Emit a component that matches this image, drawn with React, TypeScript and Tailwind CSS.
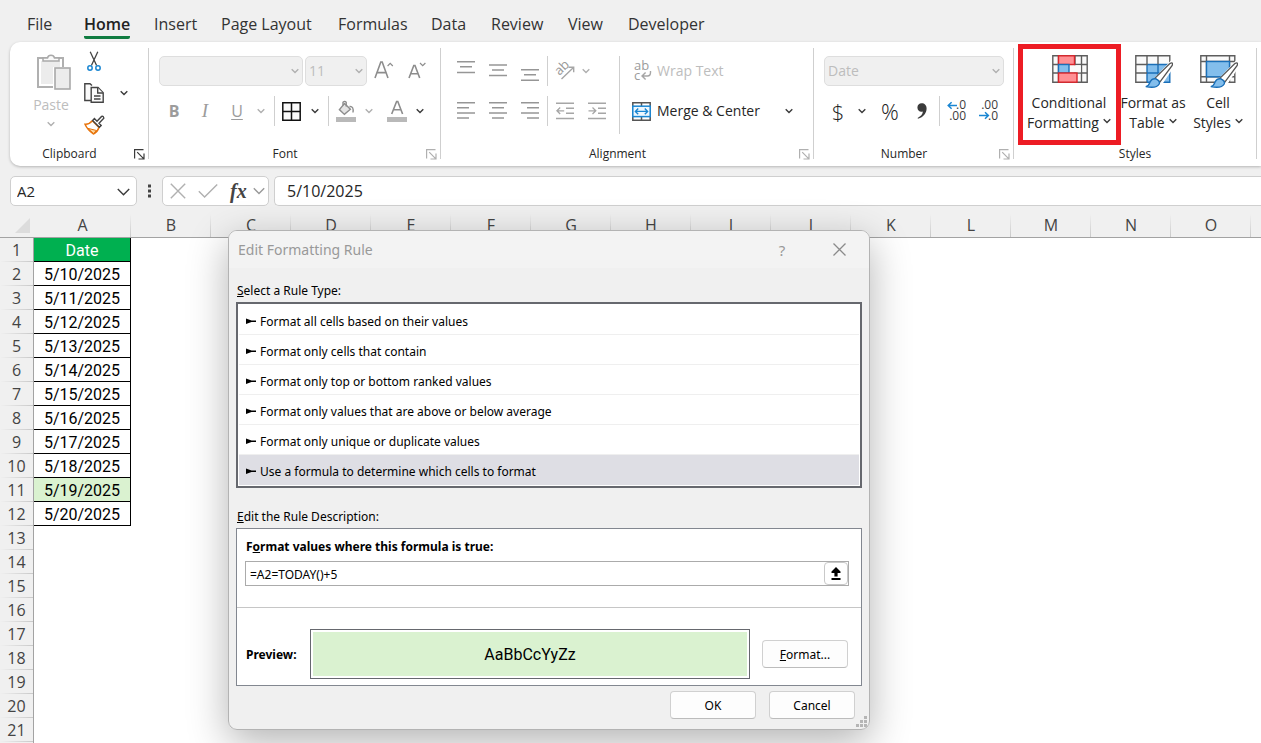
import React, { useState } from "react";

const UI = "font-['Open_Sans','Noto_Sans',sans-serif]";
const GREY = "#a6a6a6";
const DARK = "#3b3b3b";
const BLUE = "#1a86d2";

const tabs = [
  { name: "File", width: "w-[57px]" },
  { name: "Home", width: "w-[70px]" },
  { name: "Insert", width: "w-[67px]" },
  { name: "Page Layout", width: "w-[117px]" },
  { name: "Formulas", width: "w-[93px]" },
  { name: "Data", width: "w-[60px]" },
  { name: "Review", width: "w-[77px]" },
  { name: "View", width: "w-[60px]" },
  { name: "Developer", width: "w-[90px]" },
];

const columns = ["A", "B", "C", "D", "E", "F", "G", "H", "I", "J", "K", "L", "M", "N", "O", "P"];

const dates = [
  "5/10/2025",
  "5/11/2025",
  "5/12/2025",
  "5/13/2025",
  "5/14/2025",
  "5/15/2025",
  "5/16/2025",
  "5/17/2025",
  "5/18/2025",
  "5/19/2025",
  "5/20/2025",
];

const rules = [
  "Format all cells based on their values",
  "Format only cells that contain",
  "Format only top or bottom ranked values",
  "Format only values that are above or below average",
  "Format only unique or duplicate values",
  "Use a formula to determine which cells to format",
];

function Chevron({ color = DARK }: { color?: string }) {
  return (
    <svg width="8" height="6" viewBox="0 0 8 6" className="shrink-0" fill="none" stroke={color} strokeWidth="1.4">
      <path d="M0.7 1.2 4 4.5 7.3 1.2" />
    </svg>
  );
}

function WideChevron({ color = DARK }: { color?: string }) {
  return (
    <svg width="13" height="8" viewBox="0 0 13 8" className="shrink-0" fill="none" stroke={color} strokeWidth="1.4">
      <path d="M0.8 1 6.5 6.8 12.2 1" />
    </svg>
  );
}

function Tool({ label, width, children }: { label: string; width: string; children: React.ReactNode }) {
  return (
    <button type="button" aria-label={label} className={`flex h-full shrink-0 items-center justify-center ${width}`}>
      {children}
    </button>
  );
}

function Divider() {
  return <div className="h-[30px] w-px shrink-0 bg-[#cfcfcf]" />;
}

function Group({
  title,
  width,
  launcher,
  children,
}: {
  title: string;
  width: string;
  launcher?: string;
  children: React.ReactNode;
}) {
  return (
    <section aria-label={title} className={`flex shrink-0 ${width}`}>
      <div className="flex min-w-0 flex-1 flex-col">
        <div className="h-[102px]">{children}</div>
        <div className="flex h-5 items-center">
          <h2 className="flex-1 text-center text-xs text-[#262626]">{title}</h2>
          {launcher && (
            <button type="button" aria-label={`${title} settings`} className="mr-[3px] w-4">
              <svg width="11" height="11" viewBox="0 0 11 11" className="ml-auto" fill="none" stroke={launcher} strokeWidth="1.2">
                <path d="M0.6 9.5V0.6H9.5M3.2 3.2 9.6 9.6M10 4.5V10H4.5" />
              </svg>
            </button>
          )}
        </div>
      </div>
      <div className="mt-1.5 h-[111px] w-px bg-[#cfcfcf]" />
    </section>
  );
}

function Dropdown({ label, value, width }: { label: string; value: string; width: string }) {
  return (
    <div className={`relative h-[30px] shrink-0 ${width}`}>
      <select
        aria-label={label}
        disabled
        className="h-full w-full appearance-none rounded-[5px] border border-[#dedede] bg-[#f0f0f0] pl-[3px] text-sm text-[#bdbdbd] opacity-100"
      >
        <option>{value}</option>
      </select>
      <span className="pointer-events-none absolute top-3 right-1">
        <Chevron color="#b0b0b0" />
      </span>
    </div>
  );
}

function Lines({ rows }: { rows: [number, number, number][] }) {
  return (
    <svg width="18" height="24" viewBox="0 0 18 24" stroke="#969696" strokeWidth="1.5">
      {rows.map(([x1, x2, y]) => (
        <path key={y} d={`M${x1} ${y}H${x2}`} />
      ))}
    </svg>
  );
}

function PasteIcon() {
  return (
    <svg width="36" height="38" viewBox="0 0 36 38" fill="none" stroke="#a9a9a9" strokeWidth="2">
      <rect x="2" y="6" width="25" height="29" fill="#fff" stroke="#b0b0b0" />
      <rect x="5" y="9" width="19" height="23" fill="#ececec" stroke="none" />
      <path d="M7 9V6h4.5a3.6 3.6 0 0 1 7 0H23v3z" fill="#fafafa" strokeWidth="1.5" />
      <rect x="17" y="15" width="18" height="22" fill="#fff" stroke="none" />
      <rect x="19" y="16" width="15" height="21" fill="#ececec" strokeWidth="1.6" />
    </svg>
  );
}

function CutIcon() {
  return (
    <svg width="14" height="21" viewBox="0 0 14 21" fill="none">
      <path d="M3.2 0.8 9.6 14.6M10.8 0.8 4.4 14.6" stroke="#444" strokeWidth="1.3" />
      <circle cx="3" cy="17" r="2.2" stroke={BLUE} strokeWidth="1.5" />
      <circle cx="11" cy="17" r="2.2" stroke={BLUE} strokeWidth="1.5" />
    </svg>
  );
}

function CopyIcon() {
  return (
    <svg width="20" height="20" viewBox="0 0 20 20" fill="#fafafa" stroke="#444" strokeWidth="1.4">
      <path d="M7 17.5H0.8V0.8H6L8 2.5" />
      <path d="M7.2 4.5H14L19.2 9.7V19.2H7.2z" />
      <path d="M13.7 4.7V10H19M10 13H16.5M10 16H16.5" />
    </svg>
  );
}

function PainterIcon() {
  return (
    <svg width="21" height="20" viewBox="0 0 21 20" fill="none">
      <path d="M1 9.2C4 9.4 6.6 8 8.4 5.8L15 12.5C14 15.4 12 17.8 9.4 19 5.8 16.4 2.8 13.2 1 9.2z" fill="#fff" stroke="#e8740c" strokeWidth="1.5" />
      <path d="M4 13.4 12.6 15.5 9.4 18.4z" fill="#fbd7a0" stroke="#e8740c" strokeWidth="1" />
      <path d="M8.6 5.4 10.4 3.6 13 6.2 17.6 1.4Q19.6 0.6 19.8 3.2L15 8.2 17.2 10.4 15.4 12.2z" fill="#fff" stroke="#444" strokeWidth="1.4" />
    </svg>
  );
}

function BucketIcon() {
  return (
    <svg width="20" height="22" viewBox="0 0 20 22" fill="none" stroke="#8d8d8d" strokeWidth="1.4">
      <path d="M8.5 3.5 14.4 9.2 8.4 14.4 3.4 9.6z" fill="#e4e4e4" />
      <path d="M7 5.5V2.2Q8.7 0.6 10.2 2.2V6.5M13.5 6.5Q18 6 17 12.5" />
      <rect x="0" y="17" width="20" height="5" fill="#b9b9b9" stroke="none" />
    </svg>
  );
}

function FontColorIcon() {
  return (
    <svg width="20" height="22" viewBox="0 0 20 22" fill="none" stroke="#8d8d8d" strokeWidth="1.6">
      <path d="M4.7 14 9.6 1.5H10.8L15.6 14M6.3 9.8H14" />
      <rect x="0" y="17" width="20" height="5" fill="#b9b9b9" stroke="none" />
    </svg>
  );
}

function FontSizeIcon({ grow }: { grow: boolean }) {
  return grow ? (
    <svg width="20" height="20" viewBox="0 0 20 20" fill="none" stroke="#8d8d8d" strokeWidth="1.6">
      <path d="M1 17 6.8 1H8.2L14 17M3 11.6H12" />
      <path d="M13.6 5 16.2 2.4 18.8 5" strokeWidth="1.2" />
    </svg>
  ) : (
    <svg width="20" height="20" viewBox="0 0 20 20" fill="none" stroke="#8d8d8d" strokeWidth="1.6">
      <path d="M2 17 6.8 4.5H8L12.7 17M3.7 12.8H11.1" />
      <path d="M13 2 15.7 4.7 18.4 2" strokeWidth="1.2" />
    </svg>
  );
}

function BordersIcon() {
  return (
    <svg width="19" height="19" viewBox="0 0 19 19" fill="#fafafa" stroke="#111" strokeWidth="1.5">
      <path d="M0.8 0.8H18.2V18.2H0.8zM9.5 1V18M1 9.5H18" />
    </svg>
  );
}

function OrientationIcon() {
  return (
    <svg width="24" height="24" viewBox="0 0 24 24" className="overflow-visible" fill="none" stroke={GREY} strokeWidth="1.4">
      <text
        x="6.5"
        y="17"
        transform="rotate(-45 6.5 17)"
        fill="#999"
        stroke="none"
        className="font-['Open_Sans',sans-serif] text-[13px]"
      >
        ab
      </text>
      <path d="M8.5 20 20.5 8.5M15.5 8.2H20.7V13.2" />
    </svg>
  );
}

function IndentIcon({ increase }: { increase: boolean }) {
  return (
    <svg width="18" height="18" viewBox="0 0 18 18" fill="none" stroke={GREY} strokeWidth="1.5">
      <path d="M0 1.2H18M10 6.2H18M10 11.2H18M0 16.5H18" />
      <path d={increase ? "M0.5 8.8H7.5M4.5 5.5 7.8 8.8 4.5 12" : "M8.2 8.8H1.2M4.2 5.5 0.9 8.8 4.2 12"} strokeWidth="1.3" />
    </svg>
  );
}

function WrapIcon() {
  return (
    <svg width="20" height="24" viewBox="0 0 20 24" className="overflow-visible" fill="none" stroke={GREY} strokeWidth="1.4">
      <text x="2" y="11" fill="#9c9c9c" stroke="none" className="font-['Open_Sans',sans-serif] text-[13px]">ab</text>
      <text x="2" y="21" fill="#9c9c9c" stroke="none" className="font-['Open_Sans',sans-serif] text-[13px]">c</text>
      <path d="M18.5 12V13.5Q18.5 17 15.5 17H10.5M13.6 13.4 10 17 13.6 20.6" />
    </svg>
  );
}

function MergeIcon() {
  return (
    <svg width="19" height="19" viewBox="0 0 19 19" fill="none">
      <path d="M0.8 0.8H18.2V18.2H0.8zM9.5 1V5M9.5 14V18" fill="#fff" stroke="#555" strokeWidth="1.5" />
      <rect x="0.8" y="4.2" width="17.4" height="10.4" fill="#eef7fe" stroke={BLUE} strokeWidth="1.5" />
      <path d="M3.5 9.4H15.5M6.2 6.6 3.4 9.4 6.2 12.2M12.8 6.6 15.6 9.4 12.8 12.2" stroke={BLUE} strokeWidth="1.4" />
    </svg>
  );
}

function DecimalIcon({ increase }: { increase: boolean }) {
  const text = "font-['Open_Sans',sans-serif] text-xs font-normal";
  return increase ? (
    <svg width="20" height="22" viewBox="0 0 20 22" className="overflow-visible" fill={DARK}>
      <text x="19" y="9" textAnchor="end" className={text}>.0</text>
      <text x="19" y="20" textAnchor="end" className={text}>.00</text>
      <path d="M10 5.5H1.2M4.6 2.2 1.2 5.5 4.6 8.8" fill="none" stroke={BLUE} strokeWidth="1.5" />
    </svg>
  ) : (
    <svg width="20" height="22" viewBox="0 0 20 22" className="overflow-visible" fill={DARK}>
      <text x="19" y="9" textAnchor="end" className={text}>.00</text>
      <text x="19" y="20" textAnchor="end" className={text}>.0</text>
      <path d="M0 15.5H9.4M6 12.2 9.4 15.5 6 18.8" fill="none" stroke={BLUE} strokeWidth="1.5" />
    </svg>
  );
}

function ConditionalIcon() {
  return (
    <svg width="36" height="30" viewBox="0 0 36 30" fill="none">
      <path d="M0.8 1.8H35.2V28.2H0.8zM6.5 2V28M29.5 2V28M23 2V28M1 10.5H35M1 19H35" fill="#fafafa" stroke="#5d5d5d" strokeWidth="1.4" />
      <rect x="17" y="11.2" width="11.8" height="7.1" fill="#fafafa" />
      <rect x="6.5" y="1.8" width="16" height="8.7" fill="#ff9094" stroke="#d9252b" strokeWidth="1.4" />
      <rect x="6.5" y="10.5" width="10.5" height="8.5" fill="#83beec" stroke="#1a6fb8" strokeWidth="1.4" />
      <rect x="6.5" y="19" width="18.5" height="9.2" fill="#ff9094" stroke="#d9252b" strokeWidth="1.4" />
    </svg>
  );
}

function Brush() {
  return (
    <>
      <path d="M20 26 36 9 38 11 26 29z" fill="#fff" stroke="#fff" strokeWidth="3.5" />
      <path d="M19.8 24.4 34.6 9.8Q38.4 7.6 37.2 11.4L25 27.8z" fill="#fff" stroke="#555" strokeWidth="1.3" />
      <path d="M10.8 32.6Q13.8 31.8 14.8 28.6 16.6 24.2 20.8 24.8 25.4 26.8 24.2 30 21.6 34.8 10.8 32.6z" fill="#83beec" stroke="#1a6fb8" strokeWidth="1.4" />
    </>
  );
}

function TableStyleIcon() {
  return (
    <svg width="38" height="36" viewBox="0 0 38 36" fill="none">
      <path d="M0.8 1.8H34.8V28.2H0.8z" fill="#fafafa" />
      <path d="M12 10.5H34.8V28.2H12z" fill="#83beec" />
      <path d="M12 28.2V10.5H34.8V28.2H12M23 10.5V28M12 19H34.8" stroke="#1a6fb8" strokeWidth="1.4" />
      <path d="M12 28.2H0.8V1.8H34.8V10.5M12 2V10.5H1M23 2V10.5M1 19H12" stroke="#5d5d5d" strokeWidth="1.4" />
      <Brush />
    </svg>
  );
}

function CellStyleIcon() {
  return (
    <svg width="38" height="36" viewBox="0 0 38 36" fill="none">
      <path d="M0.8 1.8H34.8V28.2H0.8zM6.5 2V28M29.5 2V28M1 7.5H35M1 22.8H35" fill="#fafafa" stroke="#5d5d5d" strokeWidth="1.4" />
      <rect x="6.5" y="7.5" width="23" height="15.3" fill="#83beec" stroke="#1a6fb8" strokeWidth="1.4" />
      <Brush />
    </svg>
  );
}

function StyleButton({
  icon,
  first,
  second,
  width,
  marked = false,
}: {
  icon: React.ReactNode;
  first: string;
  second: string;
  width: string;
  marked?: boolean;
}) {
  return (
    <button type="button" className={`relative flex shrink-0 flex-col items-center ${width}`}>
      <span className="flex h-[39px] items-start pl-0.5">{icon}</span>
      <span className="text-sm leading-5 whitespace-nowrap text-[#262626]">{first}</span>
      <span className="flex items-center gap-1 text-sm leading-5 whitespace-nowrap text-[#262626]">
        {second}
        <span className="pb-1">
          <Chevron />
        </span>
      </span>
      {marked && <span className="absolute -top-2.5 left-0 h-[101px] w-[103px] border-5 border-[#ed1c24]" />}
    </button>
  );
}

function Ribbon() {
  return (
    <div className="ml-2.5 flex h-[124px] overflow-hidden rounded-l-[10px] bg-white shadow-[0_1px_3px_rgba(0,0,0,0.25)]">
      <Group title="Clipboard" width="w-[139px]" launcher={DARK}>
        <div className="flex h-full pt-[7px] pl-[10px]">
          <button type="button" className="flex w-[62px] flex-col items-center text-sm text-[#bdbdbd]">
            <span className="pl-[5px] pt-[3px]">
              <PasteIcon />
            </span>
            <span className="pt-[3px] leading-6">Paste</span>
            <span className="pt-1">
              <Chevron color="#b0b0b0" />
            </span>
          </button>
          <div className="flex w-6 flex-col items-center">
            <button type="button" aria-label="Cut" className="flex h-6 items-center"><CutIcon /></button>
            <button type="button" aria-label="Copy" className="mt-2 flex h-6 items-center"><CopyIcon /></button>
            <button type="button" aria-label="Format Painter" className="mt-2 flex h-6 items-center"><PainterIcon /></button>
          </div>
          <button type="button" aria-label="Copy options" className="mt-8 flex h-6 w-[35px] items-center justify-center">
            <Chevron />
          </button>
        </div>
      </Group>

      <Group title="Font" width="w-[292px]" launcher="#b0b0b0">
        <div className="flex flex-col gap-2.5 pt-3.5 pl-2.5">
          <div className="flex h-[30px]">
            <Dropdown label="Font name" value="" width="w-[144px]" />
            <div className="ml-0.5 flex">
              <Dropdown label="Font size" value="11" width="w-[62px]" />
            </div>
            <Tool label="Increase font size" width="w-[34px]"><FontSizeIcon grow /></Tool>
            <Tool label="Decrease font size" width="w-[32px]"><FontSizeIcon grow={false} /></Tool>
          </div>
          <div className="flex h-[30px] items-center text-base text-[#9c9c9c]">
            <Tool label="Bold" width="w-[30px]"><b>B</b></Tool>
            <Tool label="Italic" width="w-8"><i className="font-['Liberation_Serif',serif] text-[19px]">I</i></Tool>
            <Tool label="Underline" width="w-8"><u className="underline-offset-2">U</u></Tool>
            <Tool label="Underline options" width="w-4"><Chevron color="#b0b0b0" /></Tool>
            <div className="w-[5px]" />
            <Divider />
            <Tool label="Borders" width="w-8"><BordersIcon /></Tool>
            <Tool label="Border options" width="w-4"><Chevron /></Tool>
            <div className="w-[5px]" />
            <Divider />
            <Tool label="Fill color" width="w-[34px]"><BucketIcon /></Tool>
            <Tool label="Fill color options" width="w-3"><Chevron color="#b0b0b0" /></Tool>
            <div className="w-2.5" />
            <Tool label="Font color" width="w-6"><FontColorIcon /></Tool>
            <Tool label="Font color options" width="w-[22px]"><Chevron /></Tool>
          </div>
        </div>
      </Group>

      <Group title="Alignment" width="w-[373px]" launcher="#b0b0b0">
        <div className="flex pt-3.5">
          <div className="flex w-[178px] flex-col gap-2.5 pl-[9px]">
            <div className="flex h-[30px] items-center">
              <Tool label="Top align" width="w-8"><Lines rows={[[0, 18, 2.7], [3, 15, 7.7], [0, 18, 13.5]]} /></Tool>
              <Tool label="Middle align" width="w-8"><Lines rows={[[0, 18, 6], [3, 15, 11], [0, 18, 16.5]]} /></Tool>
              <Tool label="Bottom align" width="w-8"><Lines rows={[[0, 18, 10.7], [3, 15, 15.7], [0, 18, 21.2]]} /></Tool>
              <div className="w-px" />
              <Divider />
              <Tool label="Orientation" width="w-[34px]"><OrientationIcon /></Tool>
              <Tool label="Orientation options" width="w-2"><Chevron color="#b0b0b0" /></Tool>
            </div>
            <div className="flex h-[30px] items-center">
              <Tool label="Align left" width="w-8"><Lines rows={[[0, 18, 3.7], [0, 12, 8.7], [0, 18, 14], [0, 12, 19]]} /></Tool>
              <Tool label="Center" width="w-8"><Lines rows={[[0, 18, 3.7], [3, 15, 8.7], [0, 18, 14], [3, 15, 19]]} /></Tool>
              <Tool label="Align right" width="w-8"><Lines rows={[[0, 18, 3.7], [6, 18, 8.7], [0, 18, 14], [6, 18, 19]]} /></Tool>
              <div className="w-px" />
              <Divider />
              <Tool label="Decrease indent" width="w-[34px]"><IndentIcon increase={false} /></Tool>
              <Tool label="Increase indent" width="w-[30px]"><IndentIcon increase /></Tool>
            </div>
          </div>
          <div className="h-[78px] w-px bg-[#cfcfcf]" />
          <div className="flex flex-1 flex-col gap-2.5 pl-3">
            <button type="button" className="flex h-[30px] items-center gap-[5px] text-sm text-[#bdbdbd]">
              <WrapIcon />
              Wrap Text
            </button>
            <div className="flex h-[30px] items-center">
              <button type="button" className="flex items-center gap-1.5 text-sm text-[#262626]">
                <MergeIcon />
                Merge &amp; Center
              </button>
              <button type="button" aria-label="Merge options" className="mr-5 ml-auto flex h-full items-center">
                <Chevron />
              </button>
            </div>
          </div>
        </div>
      </Group>

      <Group title="Number" width="w-[200px]" launcher="#b0b0b0">
        <div className="flex flex-col gap-2.5 pt-3.5">
          <div className="pl-2.5">
            <Dropdown label="Number format" value="Date" width="w-[180px]" />
          </div>
          <div className="flex h-[30px] items-center pl-2 text-[22px] font-light text-[#222]">
            <Tool label="Accounting format" width="w-8"><span>$</span></Tool>
            <Tool label="Accounting options" width="w-4"><Chevron /></Tool>
            <Tool label="Percent style" width="w-10"><span>%</span></Tool>
            <Tool label="Comma style" width="w-6">
              <svg width="10" height="16" viewBox="0 0 10 16" fill={DARK}>
                <path d="M4.6 0.2C7.6 0.2 9.6 2.2 9.6 5.4 9.6 10 6.4 14 1 15.8L0.6 14.9C3.8 13.4 5.6 11.4 5.9 8.6 2.8 9.5 0.4 7.4 0.4 4.6 0.4 2 2.2 0.2 4.6 0.2z" />
              </svg>
            </Tool>
            <div className="w-[5px]" />
            <Divider />
            <Tool label="Increase decimal" width="w-[34px]"><DecimalIcon increase /></Tool>
            <Tool label="Decrease decimal" width="w-[30px]"><DecimalIcon increase={false} /></Tool>
          </div>
        </div>
      </Group>

      <Group title="Styles" width="w-[243px]">
        <div className="flex items-start pt-3 pl-1">
          <StyleButton icon={<ConditionalIcon />} first="Conditional" second="Formatting" width="w-[102px]" marked />
          <StyleButton icon={<TableStyleIcon />} first="Format as" second="Table" width="w-[66px]" />
          <StyleButton icon={<CellStyleIcon />} first="Cell" second="Styles" width="w-16" />
        </div>
      </Group>
    </div>
  );
}

function FormulaBar() {
  return (
    <div className="mt-2.5 ml-2.5 flex h-[30px] items-center text-base text-[#262626]">
      <div className="relative h-full w-[127px] shrink-0">
        <input
          aria-label="Name box"
          defaultValue="A2"
          className="h-full w-full rounded-[5px] border border-[#cfcfcf] bg-white pl-1.5 text-[15px] outline-none"
        />
        <span className="pointer-events-none absolute top-3 right-[7px]">
          <WideChevron />
        </span>
      </div>
      <svg width="25" height="14" viewBox="0 0 25 14" className="shrink-0" fill="#444">
        <path d="M11 0.5h3v3h-3zM11 5.5h3v3h-3zM11 10.5h3v3h-3z" />
      </svg>
      <div className="flex h-full w-[107px] shrink-0 items-center rounded-[5px] border border-[#cfcfcf] bg-white pl-[7px]">
        <button type="button" aria-label="Cancel entry">
          <svg width="16" height="16" viewBox="0 0 16 16" stroke="#b0b0b0" strokeWidth="1.4"><path d="M0.8 0.8 15.2 15.2M15.2 0.8 0.8 15.2" /></svg>
        </button>
        <button type="button" aria-label="Confirm entry" className="ml-3">
          <svg width="20" height="16" viewBox="0 0 20 16" fill="none" stroke="#b0b0b0" strokeWidth="1.4"><path d="M0.8 8.2 6.6 14 19.2 1.4" /></svg>
        </button>
        <button type="button" aria-label="Insert function" className="ml-3 flex h-full items-center gap-1.5">
          <i className="font-['Liberation_Serif',serif] text-xl leading-6 font-bold text-[#444]">fx</i>
          <svg width="12" height="8" viewBox="0 0 12 8" fill="none" stroke="#999" strokeWidth="1.4"><path d="M0.8 1.2 6 6.4 11.2 1.2" /></svg>
        </button>
      </div>
      <input
        aria-label="Formula bar"
        defaultValue="5/10/2025"
        className="ml-[5px] h-full min-w-0 flex-1 rounded-l-[5px] border border-r-0 border-[#cfcfcf] bg-white pl-3 text-base outline-none"
      />
    </div>
  );
}

function Sheet() {
  return (
    <div className="mt-2 flex-1 overflow-hidden bg-white">
      <table className="w-[1331px] table-fixed border-separate border-spacing-0 text-base">
        <colgroup>
          <col className="w-[34px]" />
          <col className="w-[97px]" />
          {columns.slice(1).map((c) => (
            <col key={c} className="w-20" />
          ))}
        </colgroup>
        <thead>
          <tr className="h-6 bg-[#f0f0f0] text-[#444]">
            <td className="border-b border-[#a3a3a3] p-0">
              <svg width="15" height="15" viewBox="0 0 15 15" className="ml-[15px]"><path d="M15 0V15H0z" fill="#dcdcdc" /></svg>
            </td>
            {columns.map((c) => (
              <th
                key={c}
                scope="col"
                className="border-b border-[#a3a3a3] bg-linear-to-t from-[#c9c9c9] to-[#f0f0f0] bg-[size:1px_100%] bg-right bg-no-repeat p-0 leading-[23px] font-normal"
              >
                {c}
              </th>
            ))}
          </tr>
        </thead>
        <tbody>
          {Array.from({ length: 22 }, (_, i) => {
            const text = i === 0 ? "Date" : dates[i - 1];
            const fill =
              i === 0 ? "bg-[#00b050] text-white" : i === 10 ? "bg-[#daf2d0] text-black" : "bg-white text-black";
            return (
              <tr key={i} className="h-6">
                <th
                  scope="row"
                  className="border-r border-[#a3a3a3] bg-[#f0f0f0] bg-linear-to-r from-[#f0f0f0] to-[#c9c9c9] bg-[size:100%_1px] bg-bottom bg-no-repeat p-0 leading-6 font-normal text-[#444]"
                >
                  {i + 1}
                </th>
                {text ? (
                  <td className={`border-r border-b border-black p-0 pt-0.5 text-center font-['Roboto',sans-serif] leading-5 ${fill}`}>
                    {text}
                  </td>
                ) : (
                  <td className="p-0" />
                )}
                <td colSpan={15} className="p-0" />
              </tr>
            );
          })}
        </tbody>
      </table>
    </div>
  );
}

const dialogButton =
  "h-7 w-[86px] shrink-0 rounded-[4px] border border-[#d0d0d0] border-b-[#bcbcbc] bg-[#fdfdfd] pt-0.5 text-xs text-black";

function RuleDialog() {
  const [selected, setSelected] = useState(5);
  return (
    <div
      role="dialog"
      aria-label="Edit Formatting Rule"
      className="absolute top-[230px] left-[228px] w-[642px] overflow-hidden rounded-[9px] border border-[#b3b3b3] bg-[#f0f0f0] font-['Noto_Sans','Open_Sans',sans-serif] text-xs text-black"
    >
      <div className="flex h-[37px] items-center bg-[#f3f3f3] pl-[9px] text-[#999]">
        <h1 className="flex-1 text-sm">Edit Formatting Rule</h1>
        <button type="button" aria-label="Help" className="w-10 text-center text-[15px]">?</button>
        <button type="button" aria-label="Close" className="mr-2 ml-[15px] flex w-11 justify-center">
          <svg width="13" height="13" viewBox="0 0 13 13" stroke="#8a8a8a" strokeWidth="1.3"><path d="M0.5 0.5 12.5 12.5M12.5 0.5 0.5 12.5" /></svg>
        </button>
      </div>
      <div className="px-[7px] pt-3.5 pb-2.5">
        <h2 id="rule-type" className="h-5 pl-px leading-[18px]"><u>S</u>elect a Rule Type:</h2>
        <ul role="listbox" aria-labelledby="rule-type" className="border-2 border-[#66686e] bg-white p-px">
          {rules.map((rule, i) => (
            <li
              key={rule}
              role="option"
              aria-selected={i === selected}
              onClick={() => setSelected(i)}
              className={`flex h-[30px] items-center gap-1 border-b pl-[7px] pt-1 ${
                i === selected ? "border-[#dedee4] bg-[#dedee4]" : "border-[#efefef]"
              }`}
            >
              <svg width="10" height="7" viewBox="0 0 10 7"><path d="M0 0.6 5.5 2.6H10V4H5.5L0 6z" /></svg>
              {rule}
            </li>
          ))}
        </ul>
        <h2 className="mt-5 h-5 pl-px leading-[18px]"><u>E</u>dit the Rule Description:</h2>
        <div className="border border-[#828790] bg-white">
          <div className="h-[79px] border-b border-[#c6c6c6] px-2 pt-2">
            <label htmlFor="formula" className="block h-6 pl-px leading-5 font-bold">F<u>o</u>rmat values where this formula is true:</label>
            <div className="mr-1 flex h-[25px] border border-[#ababab]">
              <input id="formula" defaultValue="=A2=TODAY()+5" className="min-w-0 flex-1 pt-0.5 pl-1 outline-none" />
              <button type="button" aria-label="Collapse dialog" className="flex w-6 items-center justify-center rounded-[4px] border border-[#c9c9c9]">
                <svg width="10" height="13" viewBox="0 0 10 13"><path d="M5 0 9.5 4.6V6H6.6V9.5H3.4V6H0.5V4.6zM0.5 11H9.5V13H0.5z" /></svg>
              </button>
            </div>
          </div>
          <div className="flex items-center px-[9px] pt-[21px] pb-1.5">
            <span className="w-16 pt-0.5 font-bold">Preview:</span>
            <div className="h-[50px] flex-1 border border-[#66686e] p-0.5">
              <div className="flex h-full items-center justify-center bg-[#daf2d0] pt-0.5 font-['Roboto',sans-serif] text-base">AaBbCcYyZz</div>
            </div>
            <button type="button" className={`mr-1 ml-3 ${dialogButton}`}><u>F</u>ormat...</button>
          </div>
        </div>
        <div className="flex justify-end gap-[13px] pt-[5px] pr-[7px]">
          <button type="button" className={dialogButton}>OK</button>
          <button type="button" className={dialogButton}>Cancel</button>
        </div>
      </div>
      <svg width="11" height="11" viewBox="0 0 11 11" className="absolute right-0.5 bottom-0.5" fill="#b5b5b5">
        <path d="M8 0h3v3H8zM4 4h3v3H4zM8 4h3v3H8zM0 8h3v3H0zM4 8h3v3H4zM8 8h3v3H8z" />
      </svg>
    </div>
  );
}

export default function App() {
  return (
    <div className={`relative flex h-screen flex-col overflow-hidden bg-[#f0f0f0] ${UI}`}>
      <nav className="flex h-[42px] shrink-0 pt-2.5 pl-[27px] text-base text-[#333]">
        {tabs.map(({ name, width }) => (
          <div key={name} className={`shrink-0 ${width}`}>
            <a
              href="#"
              className={`inline-block h-[29px] leading-7 whitespace-nowrap ${
                name === "Home" ? "rounded-xs border-b-3 border-[#107c41] font-semibold text-[#222]" : ""
              }`}
            >
              {name}
            </a>
          </div>
        ))}
      </nav>
      <div className="shrink-0">
        <Ribbon />
      </div>
      <div className="shrink-0">
        <FormulaBar />
      </div>
      <Sheet />
      <div className="absolute top-[230px] left-[228px] h-[500px] w-[642px] rounded-[9px] shadow-[0_12px_40px_rgba(0,0,0,0.3)]" />
      <RuleDialog />
    </div>
  );
}
